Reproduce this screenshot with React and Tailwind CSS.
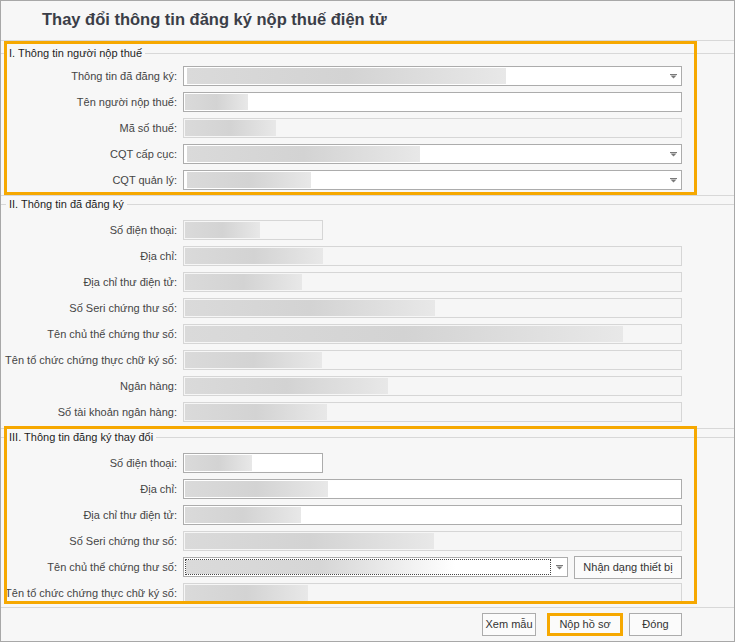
import React from 'react';

const Arrow = () => (
  <svg width="7" height="5" viewBox="0 0 7 5" className="text-[#7a7a7a]">
    <rect x="0" y="0" width="7" height="1" fill="currentColor" />
    <path d="M0.5 1.5h6L3.5 4.5z" fill="currentColor" />
  </svg>
);

const Bar = ({ w }) => (
  <div className={`h-[16px] ${w} bg-gradient-to-r from-[#dadada] via-[#d3d3d3] to-[#e8e8e8]`} />
);

// kind: input | disabled | combo | focus
const Box = ({ kind, w = 'w-[499px]', bar }) => {
  if (kind === 'disabled') {
    return (
      <div className={`h-[20px] ${w} shrink-0 border border-[#d6d6d6] bg-[#f6f6f6] p-[1px]`}>
        <Bar w={bar} />
      </div>
    );
  }
  if (kind === 'input') {
    return (
      <div className={`h-[20px] ${w} shrink-0 border border-[#acacac] bg-white p-[1px]`}>
        <Bar w={bar} />
      </div>
    );
  }
  if (kind === 'focus') {
    return (
      <div className={`flex h-[20px] ${w} shrink-0 border border-[#acacac] bg-white`}>
        <div className="m-[1px] flex-1 overflow-hidden border border-dotted border-[#444]">
          <div className="h-[14px] w-[269px] bg-gradient-to-r from-[#dadada] via-[#d6d6d6] to-[#ffffff]" />
        </div>
        <div className="flex w-[15px] items-center justify-center">
          <Arrow />
        </div>
      </div>
    );
  }
  return (
    <div className={`flex h-[20px] ${w} shrink-0 border border-[#acacac] bg-white`}>
      <div className="flex-1 p-[1px] pl-[3px]">
        <Bar w={bar} />
      </div>
      <div className="flex w-[16px] items-center justify-center">
        <Arrow />
      </div>
    </div>
  );
};

const Row = ({ label, children }) => (
  <div className="flex h-[20px] items-center gap-[6px]">
    <label className="w-[176px] shrink-0 whitespace-nowrap text-right text-[#454545]">{label}</label>
    {children}
  </div>
);

const Caption = ({ children }) => (
  <div className="flex h-[16px] items-center">
    <div className="w-[5px] border-t border-[#d8d8d8]" />
    <span className="whitespace-nowrap px-[3px] text-[#1e1e1e]">{children}</span>
    <div className="flex-1 border-t border-[#d8d8d8]" />
  </div>
);

const BtnSm = ({ children, className = '' }) => (
  <button
    type="button"
    className={`h-[23px] whitespace-nowrap border border-[#acacac] bg-[#fbfbfb] text-[#333] ${className}`}
  >
    {children}
  </button>
);

const section2 = [
  ['Số điện thoại:', 'w-[140px]', 'w-[75px]'],
  ['Địa chỉ:', 'w-[499px]', 'w-[138px]'],
  ['Địa chỉ thư điện tử:', 'w-[499px]', 'w-[117px]'],
  ['Số Seri chứng thư số:', 'w-[499px]', 'w-[250px]'],
  ['Tên chủ thể chứng thư số:', 'w-[499px]', 'w-[438px]'],
  ['Tên tổ chức chứng thực chữ ký số:', 'w-[499px]', 'w-[137px]'],
  ['Ngân hàng:', 'w-[499px]', 'w-[203px]'],
  ['Số tài khoản ngân hàng:', 'w-[499px]', 'w-[142px]'],
];

export default function App() {
  return (
    <div className="h-[642px] w-[735px] bg-white font-['Liberation_Sans',Arial,sans-serif] text-[11px]">
      <div className="flex h-[642px] w-[735px] flex-col border border-[#a8a8a8] bg-[#f7f7f7]">
        {/* Title */}
        <div className="flex h-[40px] shrink-0 items-center border-b border-[#d8d8d8] pb-[3px] pl-[41px] text-[16.5px] font-bold text-[#3b3e48]">
          Thay đổi thông tin đăng ký nộp thuế điện tử
        </div>

        {/* I */}
        <section className="relative border-b border-[#d8d8d8] pb-[5px] pt-[4px]">
          <Caption>I. Thông tin người nộp thuế</Caption>
          <div className="mt-[5px] flex flex-col gap-[6px]">
            <Row label="Thông tin đã đăng ký:">
              <Box kind="combo" bar="w-[319px]" />
            </Row>
            <Row label="Tên người nộp thuế:">
              <Box kind="input" bar="w-[63px]" />
            </Row>
            <Row label="Mã số thuế:">
              <Box kind="disabled" bar="w-[91px]" />
            </Row>
            <Row label="CQT cấp cục:">
              <Box kind="combo" bar="w-[233px]" />
            </Row>
            <Row label="CQT quản lý:">
              <Box kind="combo" bar="w-[124px]" />
            </Row>
          </div>
          <div className="pointer-events-none absolute bottom-[0px] left-[3px] top-0 w-[693px] border-[3px] border-[#f6a800]" />
        </section>

        {/* II */}
        <section className="border-b border-[#d8d8d8] pb-[6px]">
          <Caption>II. Thông tin đã đăng ký</Caption>
          <div className="mt-[8px] flex flex-col gap-[6px]">
            {section2.map(([label, w, bar]) => (
              <Row key={label} label={label}>
                <Box kind="disabled" w={w} bar={bar} />
              </Row>
            ))}
          </div>
        </section>

        {/* III */}
        <section className="relative border-b border-[#d8d8d8] pb-[4px]">
          <Caption>III. Thông tin đăng ký thay đổi</Caption>
          <div className="mt-[8px] flex flex-col gap-[6px]">
            <Row label="Số điện thoại:">
              <Box kind="input" w="w-[140px]" bar="w-[67px]" />
            </Row>
            <Row label="Địa chỉ:">
              <Box kind="input" bar="w-[143px]" />
            </Row>
            <Row label="Địa chỉ thư điện tử:">
              <Box kind="input" bar="w-[116px]" />
            </Row>
            <Row label="Số Seri chứng thư số:">
              <Box kind="disabled" bar="w-[249px]" />
            </Row>
            <Row label="Tên chủ thể chứng thư số:">
              <Box kind="focus" w="w-[385px]" />
              <BtnSm className="h-[22px] w-[108px] shrink-0">Nhận dạng thiết bị</BtnSm>
            </Row>
            <Row label="Tên tổ chức chứng thực chữ ký số:">
              <Box kind="disabled" bar="w-[123px]" />
            </Row>
          </div>
          <div className="pointer-events-none absolute bottom-[3px] left-[3px] top-[-3px] w-[693px] border-[3px] border-[#f6a800]" />
        </section>

        {/* Buttons */}
        <div className="flex justify-end gap-[6px] pr-[52px] pt-[5px]">
          <BtnSm className="mr-[5px] w-[54px]">Xem mẫu</BtnSm>
          <button
            type="button"
            className="h-[23px] w-[76px] whitespace-nowrap border-[3px] border-[#f6a800] bg-[#fbfbfb] text-[#333]"
          >
            Nộp hồ sơ
          </button>
          <BtnSm className="w-[53px]">Đóng</BtnSm>
        </div>
      </div>
    </div>
  );
}
